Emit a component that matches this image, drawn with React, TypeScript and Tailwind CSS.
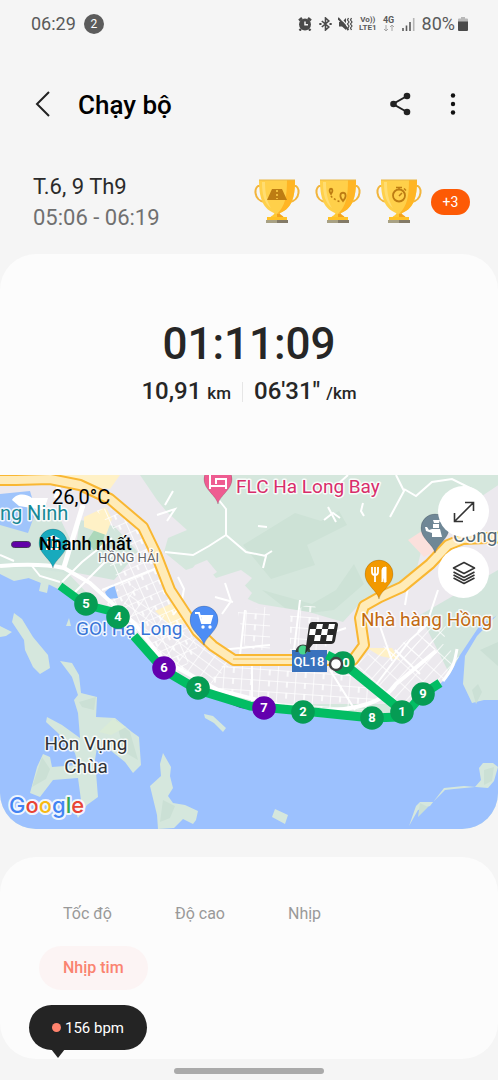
import { useState } from 'react';
import type { ReactNode } from 'react';

const tabs = ['Tốc độ', 'Độ cao', 'Nhịp', 'Nhịp tim'];

const markers = [
  { label: '5', x: 86, y: 604 },
  { label: '4', x: 118, y: 617 },
  { label: '6', x: 164, y: 668, fast: true },
  { label: '3', x: 198, y: 688 },
  { label: '7', x: 264, y: 708, fast: true },
  { label: '2', x: 303, y: 712 },
  { label: '8', x: 372, y: 718 },
  { label: '1', x: 402, y: 712 },
  { label: '9', x: 423, y: 694 },
];

function StatusBar() {
  return (
    <div className="flex h-12 items-center justify-between pl-[31px] pr-[30px] text-[#5a5a5a]">
      <div className="flex items-center gap-2">
        <span className="text-[18px] leading-6">06:29</span>
        <span className="flex h-5 w-5 items-center justify-center rounded-full bg-[#5c5c5c] text-[12px] leading-5 text-white">2</span>
      </div>
      <div className="flex items-center">
        <svg className="mr-[7px] h-[14px] w-[14px]" viewBox="0 0 14 14">
          <path d="M1 3.500 4 1M13 3.500 10 1M3 12l-1.500 1.500M11 12l1.500 1.500" stroke="#4a4a4a" strokeWidth="2.400" />
          <circle cx="7" cy="7.500" r="6" fill="#4a4a4a" />
          <path d="M7 4.500v3.300h3" fill="none" stroke="#f5f5f5" strokeWidth="1.500" />
        </svg>
        <svg className="mr-[6px] h-[14px] w-[13px]" viewBox="0 0 13 14" fill="none" stroke="#4a4a4a" strokeWidth="1.600">
          <path d="M2.800 4l7 6-3.300 3V1l3.300 3-7 6" />
          <path d="M.3 7h2.200M10.500 7h2.200" strokeWidth="2" />
        </svg>
        <svg className="mr-[6px] h-[14px] w-[15px]" viewBox="0 0 15 14">
          <path d="M1 5h3l4-4v12L4 9.500H1z" fill="#4a4a4a" />
          <path d="M1.500 0l11 12" stroke="#f5f5f5" strokeWidth="1.200" />
          <path d="M0 1l10.500 12" stroke="#4a4a4a" strokeWidth="2" />
          <path d="M10.500 1l-1 2 1.500 2-1.500 2 1.500 2-1 2M13.500 1l-1 2 1.500 2-1.500 2 1.500 2-1.500 2 1 2" stroke="#4a4a4a" fill="none" strokeWidth="1.200" />
        </svg>
        <span className="mr-[6px] flex flex-col items-center text-[8px] font-bold leading-2">
          <span>Vo))</span>
          <span>LTE1</span>
        </span>
        <span className="mr-[7px] flex flex-col items-center text-[9px] font-bold leading-2">
          <span>4G</span>
          <svg className="h-2 w-3" viewBox="0 0 12 8" fill="none" stroke="#a5a5a5">
            <path d="M3 1v6M1 5l2 2 2-2M9 7V1M7 3l2-2 2 2" />
          </svg>
        </span>
        <svg className="mr-[7px] h-[14px] w-[13px]" viewBox="0 0 13 14">
          <path d="M1 14v-3M4.500 14V8.500M8 14V5" stroke="#5a5a5a" strokeWidth="1.600" />
          <path d="M11.700 14V1" stroke="#b5b5b5" strokeWidth="1.600" />
        </svg>
        <span className="mr-[3px] text-[18px] leading-6">80%</span>
        <svg className="h-[14px] w-[10px]" viewBox="0 0 10 14">
          <path d="M3 0h4v1.500h2a1 1 0 0 1 1 1V7H0V2.500a1 1 0 0 1 1-1h2z" fill="#b8b8b8" />
          <path d="M0 4.500h10V13a1 1 0 0 1-1 1H1a1 1 0 0 1-1-1z" fill="#4a4a4a" />
        </svg>
      </div>
    </div>
  );
}

function Header() {
  return (
    <header className="flex h-28 items-center pl-[29px] pr-[33px]">
      <button aria-label="Quay lại" className="flex h-8 w-8 items-center">
        <svg className="h-8 w-8" viewBox="0 0 32 32" fill="none" stroke="#222" strokeWidth="2">
          <path d="M20 4 8 16l12 12" />
        </svg>
      </button>
      <h1 className="ml-[17px] flex-1 pt-[2px] text-[26px] font-medium leading-8 text-black">Chạy bộ</h1>
      <button aria-label="Chia sẻ" className="mr-[29px]">
        <svg className="h-6 w-6" viewBox="0 0 24 24" fill="#222">
          <path d="M19 4 5 12l14 8" fill="none" stroke="#222" strokeWidth="2" />
          <circle cx="19" cy="4" r="3.300" />
          <circle cx="5.500" cy="12" r="3.300" />
          <circle cx="19" cy="20" r="3.300" />
        </svg>
      </button>
      <button aria-label="Tùy chọn khác">
        <svg className="h-6 w-6" viewBox="0 0 24 24" fill="#111">
          <circle cx="12" cy="3.500" r="2.200" />
          <circle cx="12" cy="12" r="2.200" />
          <circle cx="12" cy="20.500" r="2.200" />
        </svg>
      </button>
    </header>
  );
}

function Trophy({ children }: { children: ReactNode }) {
  return (
    <svg className="h-[45px] w-[46px]" viewBox="0 0 46 45">
      <path d="M7 7C-1 5-1 22 11 23M39 7c8-2 8 15-4 16" fill="none" stroke="#f2b53c" strokeWidth="2" />
      <path d="M16 40c0-4 5-3 5-8h4c0 5 5 4 5 8z" fill="#ffc833" />
      <path d="M23 33h2c1 4 5 3 5 7h-7z" fill="#f3a21e" />
      <path d="M5 1h36c0 17-3 30-18 34C8 31 5 18 5 1z" fill="#ffd04a" />
      <path d="M33 1h8c0 17-3 30-18 34 8-8 10-17 10-34z" fill="#ffb524" />
      <path d="M8 3h3c0 12 2 20 6 26C10 24 8 15 8 3z" fill="#ffdd72" />
      <path d="M5 1h36" stroke="#e9b747" />
      <path d="M13 38h20v3H13z" fill="#ffc127" />
      <path d="M12 41h11v3H12z" fill="#a8a184" />
      <path d="M23 41h11v3H23z" fill="#837a67" />
      {children}
    </svg>
  );
}

function Summary() {
  return (
    <section className="flex h-[94px] items-start justify-between pl-[33px] pr-[28px] pt-[11px]">
      <div className="text-[22px] leading-[31px]">
        <p className="text-[#2b2b2b]">T.6, 9 Th9</p>
        <p className="text-[#707070]">05:06 - 06:19</p>
      </div>
      <div className="flex items-center gap-[15px] pt-2">
        <Trophy>
          <path d="m18 10-5 11h20l-5-11z" fill="#bd7c13" />
          <path d="M23 11v9" stroke="#ffd04a" strokeWidth="1.500" strokeDasharray="2 2" />
        </Trophy>
        <Trophy>
          <path d="M16 15c-5-7 5-7 0 0zM28 22c-9-11 9-11 0 0z" fill="none" stroke="#bd7c13" strokeWidth="1.800" />
          <path d="M16 17c2 3 7 5 10 6" fill="none" stroke="#bd7c13" strokeWidth="1.500" strokeDasharray="2 2" />
        </Trophy>
        <Trophy>
          <circle cx="23" cy="16.500" r="6" fill="none" stroke="#bd7c13" strokeWidth="1.800" />
          <path d="M20 8.500h6M23 8v3M28 9.500l2 2M23 17l3-3" stroke="#bd7c13" strokeWidth="1.500" />
        </Trophy>
        <span className="-ml-[6px] flex h-[26px] w-[39px] items-center justify-center rounded-full bg-[#fd5a05] text-[14px] leading-5 text-white">+3</span>
      </div>
    </section>
  );
}

function Pin({ x, y, color, children }: { x: number; y: number; color: string; children: ReactNode }) {
  return (
    <g transform={`translate(${x} ${y})`}>
      <path d="M0 0c-2-9-14-14-14-25a14 14 0 0 1 28 0C14-14 2-9 0 0z" fill={color} stroke="#000" strokeOpacity=".15" />
      {children}
    </g>
  );
}

function RouteMap() {
  return (
    <svg className="h-full w-full" viewBox="0 475 498 354" preserveAspectRatio="xMidYMid slice" role="img" aria-label="Bản đồ">
      <defs>
        <pattern id="westGrid" width="14" height="11" patternUnits="userSpaceOnUse" patternTransform="rotate(-24)">
          <path d="M0 0h14M0 0v11M7 0v5" stroke="#fff" strokeWidth="1.700" fill="none" />
        </pattern>
        <pattern id="midGrid" width="13" height="9" patternUnits="userSpaceOnUse" patternTransform="rotate(36)">
          <path d="M0 0h13M0 0v9" stroke="#fff" strokeWidth="1.500" fill="none" />
        </pattern>
        <pattern id="flatGrid" width="18" height="11" patternUnits="userSpaceOnUse" patternTransform="rotate(4)">
          <path d="M0 0h18M0 0v11M10 0v6" stroke="#fff" strokeWidth="1.500" fill="none" />
        </pattern>
        <pattern id="eastGrid" width="16" height="10" patternUnits="userSpaceOnUse" patternTransform="rotate(-48)">
          <path d="M0 0h16M0 0v10" stroke="#fff" strokeWidth="1.500" fill="none" />
        </pattern>
      </defs>

      {/* land */}
      <path d="M0 475h498v354H0z" fill="#d5e7dd" />
      <path d="M243 545l52-32 26 8 18-10 8 14-40 20 8 20-44 14zM262 590l50 14 24-14 18-26 10 20-30 26-40 5z" fill="#cde2d6" />
      <path d="M0 545l40-20 20 40H0zM80 545l28-4 12 28-24 15z" fill="#cce0d2" />
      <path d="M0 475h140l17 25 10 12 20 18-19 8-4 14 22 18 18-6 12 14 25-8 11 8-15 16 22 10 50 8 34 10 22-24 22-4 28-18 10-40 16-22 32-12 30-20h25v100l-31 8-20 22-18 42-24 50H270L190 685l-80-68-45-47H0z" fill="#ece9ee" />
      <path d="M195 565l12-5 10 12-22 15-12-7zM215 595l22-18 15 16-14 20-22 5z" fill="#ece9ee" />
      <path d="M0 510h56l25 52-10 12H0z" fill="#d2e5dc" />
      <path d="M80 520l34 6 24 26-24 28-42-8z" fill="#d2e5dc" />
      <path d="M87 541l8-12 10 5-4 13-7 4z" fill="#acd8ba" />
      <path d="M84 517l22-10 6 12-6 16-22-8zM155 611l22-10 18 22-25 2zM40 475h80l-10 14-60-8zM367 648l25 0 8 12-20-4z" fill="#fff1c6" />
      <path d="M420 615l78-45v65l-25 30-22 12-10-20z" fill="#d2e5dc" />
      <path d="M408 540l14-9 14 20-12 6z" fill="#fbe0dc" />
      <path d="M0 494l30-3 6 20-8 22-28-8z" fill="#9fc4fb" />
      <path d="M12 500c5-8 15-6 20-2l16 0-4 12-25-4z" fill="#fff" />

      {/* street grids */}
      <path d="M96 510l14-2 38 30 12 30 24 50 13 30-18 30-72-74 14-20-12-20 20-18z" fill="url(#westGrid)" />
      <path d="M118 617l14-32 45 42 55 36-26 26z" fill="url(#midGrid)" />
      <path d="M222 666l130-1 30 25-12 20-90-4-74-20z" fill="url(#flatGrid)" />
      <path d="M352 668l22-20 62-10 24 20-22 30-40 20-28-20z" fill="url(#eastGrid)" />
      <path d="M238 612l32-6 0 45-25-3zM290 612l24-10 14 48-38 2z" fill="url(#flatGrid)" />
      <path d="M376 660l62-40 12 10-20 25z" fill="url(#eastGrid)" />

      {/* sea */}
      <path d="M0 570L16 573 41 583 61 586 86 606 118 619 164 671 198 692 264 711 320 717 378 721 404 717 422 700 438 686 450 674 460 655 470 640 480 625 498 615V829H0z" fill="#9cc1fe" />
      <path d="M0 566l62 6 8 8-12 9-24-12-20 4-14-7zM41 582l8 1-2 10-8-2z" fill="#d5e7dd" />
      <path d="M465 656l12-20 21-22v86l-14 0-12 3-9-19z" fill="#d5e7dd" />
      <path d="M472 690l6-6 4 8-6 12zM480 650l18-8v24z" fill="#cbe0d5" />
      <path d="M105 592l9-8 4 14-10 1z" fill="#8fbcfc" />
      <path d="M443 681c12-15 12-22 14-32" fill="none" stroke="#fff" strokeWidth="3" />

      {/* islands */}
      <g fill="#d5e7dd">
        <path d="M0 626L12 632 6 636 0 637zM14 613L22 619 33 637 48 655 50 668 40 674 33 667 25 650 24 640 12 622z" />
        <path d="M60 661L72 663 79 675 81 693 97 697 96 717 115 718 132 732 139 737 141 765 133 773 125 762 110 750 97 747 95 760 98 797 87 805 78 818 76 813 81 800 78 778 53 780 40 797 30 793 37 767 43 754 50 757 52 767 78 765 75 753 58 733 46 722 47 717 62 725 80 738 78 713 74 700 78 695 72 677z" />
        <path d="M163 753L171 767 170 776 173 788 168 796 173 803 185 805 198 811 196 820 193 824 183 819 174 828 158 829 157 815 150 786 161 776 160 764z" />
        <path d="M204 714l9 2 13 12-3 4-9-9-9-5zM69 618l2 8-5 0zM275 809l13 6-3 9-13-7zM409 826l7-20 4-4 13 0 12-12 9-1 21-2 6-7-2-12 4-5h10l5 4-4 14-6 7-24-2-20 2-14 18-12 4z" />
      </g>
      <path d="M79 702l17-5-2 13-12-3zM116 720l14 12 8 28-14-8zM42 757l8 12-4 10-14 8zM484 770l10-3-2 14-8 4zM163 800l12 6-5 12-10 4zM420 803l8 4-10 10z" fill="#cbe0d5" />
      <path d="M99 732l14-13 13 8-15 8z" fill="#daebd7" />

      {/* local roads */}
      <g fill="none" stroke="#fff">
        <path d="M0 566c25-2 45-2 64 2l26 15 45 41 28 36 55 30 80 20c40 2 82-1 98-26l40-33" strokeWidth="4" />
        <path d="M83 505L64 567M60 482l-4 16" strokeWidth="5" />
        <path d="M32 566l8 10 20 6M62 582l20-20 30-24M75 592l38-38M102 590l60-24" strokeWidth="2" />
        <path d="M218 499l8 10v26l-17 11-16 9-28-3M226 535l20 17 20 4-3 12M264 556l8-5M328 507l8 15M324 520l9-7 7 5M363 503l-2 8 3 5M390 517l14-26-8-16M348 475l-10 9M404 489l12 7 16-14 20-3 20 10M258 526l9 1M0 555l14 6M165 505l8-14M157 515l18-6-8 12M178 577l6 12-3 16M181 605l-8 10M225 583l6 18-9 13M215 597l18 5M380 626l12 35M410 575l-5 30M438 590l-10 30-10 12" strokeWidth="2" />
        <path d="M372 690l38-50 20-18M330 670l25 40M252 665v40M220 650l50-5M245 610l-5 45M300 600l-6 50M310 640l36-12M395 650l25 24" strokeWidth="2" />
      </g>

      {/* highway */}
      <path d="M0 480l16 0 34-1 30 6 30 14 33 28 13 27 14 36 27 41 16 15 21 14h119l11-15-4-27 4-12 16-9 22-10 28-23 18-19 15-6 45-2" fill="none" stroke="#f9b732" strokeWidth="12" strokeLinejoin="round" />
      <path d="M0 480l16 0 34-1 30 6 30 14 33 28 13 27 14 36 27 41 16 15 21 14h119l11-15-4-27 4-12 16-9 22-10 28-23 18-19 15-6 45-2" fill="none" stroke="#ffebb8" strokeWidth="8" strokeLinejoin="round" />
      <path d="M233 659h70" stroke="#f9bd42" strokeWidth="1" />

      {/* places */}
      <g strokeWidth="3" stroke="#fff" strokeOpacity=".85" paintOrder="stroke" strokeLinejoin="round">
        <text x="-11" y="520" fontSize="20" fill="#188996">ang Ninh</text>
        <text x="98" y="562" fontSize="13" fill="#64666b">HỒNG HẢI</text>
        <text x="76" y="635" fontSize="19" fill="#3875d7">GO! Hạ Long</text>
        <text x="361" y="626" fontSize="19" fill="#c26a13">Nhà hàng Hồng</text>
        <text x="453" y="542" fontSize="19" fill="#526975">Công</text>
        <text x="86" y="750" fontSize="19" textAnchor="middle" fill="#303236">Hòn Vụng</text>
        <text x="86" y="773" fontSize="19" textAnchor="middle" fill="#303236">Chùa</text>
        <text x="236" y="493" fontSize="19" fill="#d82d6b">FLC Ha Long Bay</text>
      </g>
      <Pin x={53} y={568} color="#18aabd">
        <path d="M-7-29l7-4 7 4zM-6-27h2v6h-2zM-1-27h2v6h-2zM4-27h2v6H4zM-7-20H7v2H-7z" fill="#fff" />
      </Pin>
      <Pin x={218} y={504} color="#ee5c91">
        <path d="M-8-32V-15M-7-18H8v-7H-2v5M8-18v3" fill="none" stroke="#fff" strokeWidth="2" />
      </Pin>
      <Pin x={204} y={645} color="#4d8df5">
        <path d="M-9-32h4l3 10H6l2-7H-4" fill="none" stroke="#fff" strokeWidth="2" />
        <path d="M-3-29H8l-2 6h-8z" fill="#fff" />
        <circle cx="-1" cy="-18" r="1.700" fill="#fff" />
        <circle cx="6" cy="-18" r="1.700" fill="#fff" />
      </Pin>
      <Pin x={379} y={599} color="#f29900">
        <path d="M-7-32v5q0 3 3 3t3-3v-5M-4-32v15" fill="none" stroke="#fff" strokeWidth="1.800" />
        <path d="M3-17v-12q0-3 4-3v15H5v-6z" fill="#fff" stroke="#fff" />
      </Pin>
      <Pin x={435} y={553} color="#6f8796">
        <path d="M-2-33h7l-1 3h-5zM-2-29h6v4h-6zM-3-24h8l2 8H-3l0-4-6-2-1-4 2 0 2 3z" fill="#fff" />
      </Pin>
      <path d="M292 650h35v22h-35z" fill="#3972bd" />
      <text x="309" y="666" textAnchor="middle" fontSize="13" fontWeight="500" fill="#fff">QL18</text>

      {/* run */}
      <path d="M205 692l36 14 20 3" fill="none" stroke="#6200b3" strokeWidth="4" />
      <path d="M60 586l26 19 32 8" fill="none" stroke="#02bd63" strokeWidth="8" strokeLinejoin="round" />
      <path d="M134 636l30 34 34 20 52 16 53 5 69 7 27-1q6 0 9-6l15-17 17-11M327 655l16 8 59 48" fill="none" stroke="#02bd63" strokeWidth="9" strokeLinejoin="round" />
      {markers.map((m) => (
        <g key={m.label}>
          <circle cx={m.x} cy={m.y} r="11.800" fill={m.fast ? '#6300ae' : '#069c54'} />
          <text x={m.x} y={m.y + 4} textAnchor="middle" fontSize="13" fontWeight="700" fill="#fff">{m.label}</text>
        </g>
      ))}
      <circle cx="343" cy="663" r="11.800" fill="#069c54" />
      <text x="346" y="667" textAnchor="middle" fontSize="13" fontWeight="700" fill="#fff">0</text>
      <circle cx="336" cy="664" r="6" fill="#fff" stroke="#424242" strokeWidth="2.400" />
      <path d="M297 652a6 6 0 1 1 12 0" fill="none" stroke="#384640" strokeWidth="3" />
      <circle cx="303" cy="650" r="4.500" fill="#48d68b" />
      <path d="M312 622h23q3 0 3 3l-3 16q-1 3-4 3h-18l-8 10 4-29q1-3 3-3z" fill="#292929" />
      <path d="M317 624h6l-1 5h-6zM329 624h6l-1 5h-6zM310 629h6l-1 6h-6zM322 629h6l-1 6h-6zM315 635h6l-1 6h-6zM327 635h6l-1 6h-6z" fill="#fff" />

      <text x="9" y="813" fontSize="22" fontWeight="500" stroke="#fff" strokeWidth="4" strokeOpacity=".85" paintOrder="stroke" strokeLinejoin="round" className="font-[Inter,sans-serif]">
        <tspan fill="#4384f3">G</tspan>
        <tspan fill="#e84435">o</tspan>
        <tspan fill="#f8ba15">o</tspan>
        <tspan fill="#4384f3">g</tspan>
        <tspan fill="#34a653">l</tspan>
        <tspan fill="#e84435">e</tspan>
      </text>
    </svg>
  );
}

function WorkoutCard() {
  return (
    <section className="overflow-hidden rounded-[36px] bg-[#fcfcfc] pt-[65px] text-[#262626]">
      <p className="text-center text-[44px] font-medium leading-[50px]">01:11:09</p>
      <div className="mt-[6px] flex items-center justify-center pb-[66px] leading-8">
        <p className="text-[24px] font-medium leading-8">10,91 <span className="text-[17px]">km</span></p>
        <span className="mx-[11px] h-5 w-px bg-[#e6e6e6]" />
        <p className="text-[24px] font-medium leading-8">06'31" <span className="text-[17px]">/km</span></p>
      </div>
      <div className="relative h-[354px]">
        <RouteMap />
        <div className="absolute left-[11px] top-[10px] text-black">
          <p className="ml-[41px] text-[20px] leading-6">26,0°C</p>
          <p className="mt-[23px] flex items-center gap-2 text-[18px] font-medium leading-6">
            <span className="h-[7px] w-5 rounded-full border border-[#45375a] bg-[#6200a8]" />
            Nhanh nhất
          </p>
        </div>
        <div className="absolute right-[9px] top-[11px] flex flex-col gap-[10px]">
          <button aria-label="Phóng to" className="flex h-[51px] w-[51px] items-center justify-center rounded-full bg-white">
            <svg className="h-6 w-6" viewBox="0 0 24 24" fill="none" stroke="#333" strokeWidth="1.600">
              <path d="M3 21 21 3M13 2.500h8.500V11M2.500 13v8.500H11" />
            </svg>
          </button>
          <button aria-label="Lớp bản đồ" className="flex h-[51px] w-[51px] items-center justify-center rounded-full bg-white">
            <svg className="h-6 w-6" viewBox="0 0 24 24" fill="none" stroke="#333" strokeWidth="1.600" strokeLinejoin="round">
              <path d="M12 1.500 1.500 7 12 12.500 22.500 7zM1.500 11 12 16.500 22.500 11M1.500 14 12 19.500 22.500 14M1.500 17 12 22.500 22.500 17" />
            </svg>
          </button>
        </div>
      </div>
    </section>
  );
}

function ChartCard() {
  const [active, setActive] = useState('Nhịp tim');

  return (
    <section className="mt-7 rounded-[36px] bg-[#fcfcfc] px-[39px] pb-[9px] pt-[35px]">
      <div className="flex flex-wrap gap-x-[15px] gap-y-[10px]">
        {tabs.map((tab) => (
          <button
            key={tab}
            onClick={() => setActive(tab)}
            className={`h-11 rounded-full px-6 text-[16px] leading-6 ${
              active === tab ? 'bg-[#fcf4f4] font-medium text-[#fa8370]' : 'text-[#999]'
            }`}
          >
            {tab}
          </button>
        ))}
      </div>
      <div className="relative -ml-[10px] mt-[15px] flex h-[45px] w-[118px] items-center justify-center gap-1 rounded-full bg-[#242424] text-[15px] leading-6 text-white">
        <span className="h-[9px] w-[9px] rounded-full bg-[#ff836d]" />
        156 bpm
        <svg className="absolute left-[22px] top-[44px] h-[9px] w-[14px]" viewBox="0 0 14 9">
          <path d="M0 0h14L7 9z" fill="#242424" />
        </svg>
      </div>
    </section>
  );
}

export default function App() {
  return (
    <main className="min-h-screen bg-[#f5f5f5] font-[Roboto,sans-serif]">
      <StatusBar />
      <Header />
      <Summary />
      <WorkoutCard />
      <ChartCard />
      <div className="mx-auto mb-[6px] mt-[9px] h-[6px] w-[150px] rounded-full bg-[#aaa]" />
    </main>
  );
}
